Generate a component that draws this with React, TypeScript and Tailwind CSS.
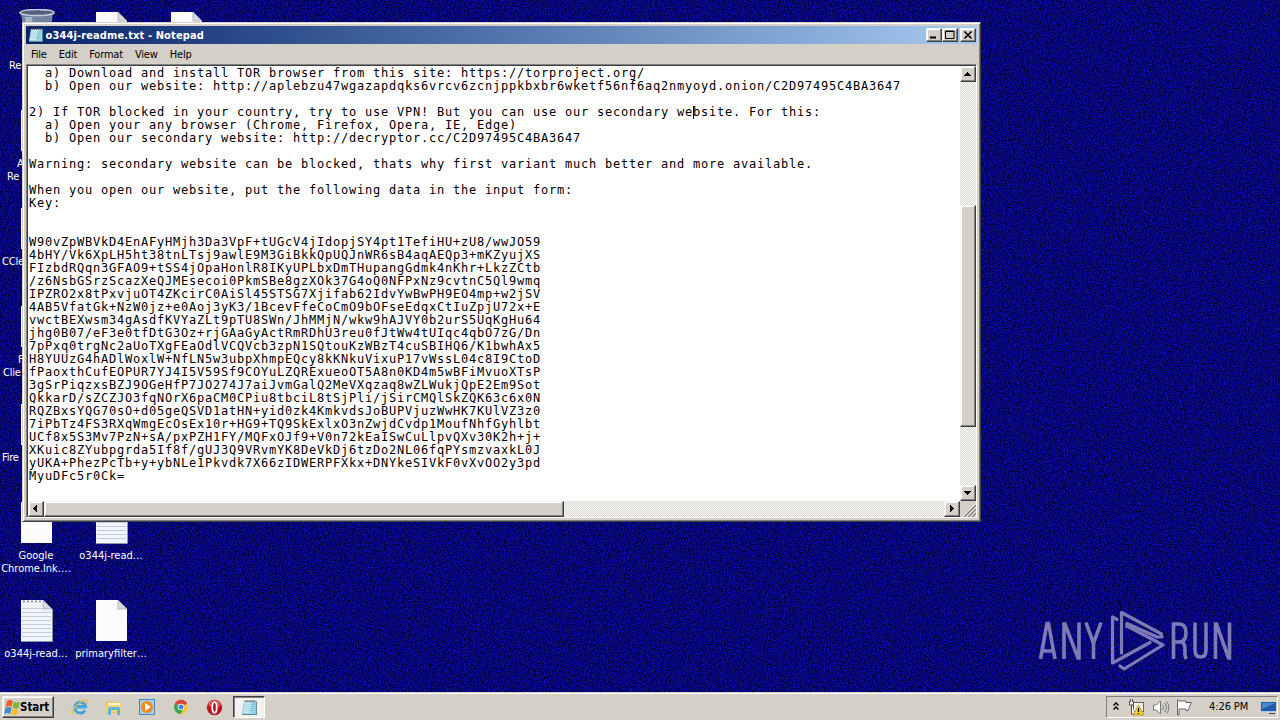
import React from "react";

const RAISED =
  "bg-[#d4d0c8] border border-t-[#f4f2ee] border-l-[#f4f2ee] border-r-[#404040] border-b-[#404040] shadow-[inset_-1px_-1px_0_#808080,inset_1px_1px_0_#ffffff]";
const TRACK =
  "bg-[#eae8e4] bg-[repeating-conic-gradient(#d9d6d0_0_25%,#fbfaf9_0_50%)] bg-[length:2px_2px]";
const UI = "font-['DejaVu_Sans_Condensed','DejaVu_Sans',sans-serif] [font-stretch:condensed]";

const LINES: string[] = [
  "  a) Download and install TOR browser from this site: https://torproject.org/",
  "  b) Open our website: http://aplebzu47wgazapdqks6vrcv6zcnjppkbxbr6wketf56nf6aq2nmyoyd.onion/C2D97495C4BA3647",
  "",
  "2) If TOR blocked in your country, try to use VPN! But you can use our secondary website. For this:",
  "  a) Open your any browser (Chrome, Firefox, Opera, IE, Edge)",
  "  b) Open our secondary website: http://decryptor.cc/C2D97495C4BA3647",
  "",
  "Warning: secondary website can be blocked, thats why first variant much better and more available.",
  "",
  "When you open our website, put the following data in the input form:",
  "Key:",
  "",
  "",
  "W90vZpWBVkD4EnAFyHMjh3Da3VpF+tUGcV4jIdopjSY4pt1TefiHU+zU8/wwJO59",
  "4bHY/Vk6XpLH5ht38tnLTsj9awlE9M3GiBkkQpUQJnWR6sB4aqAEQp3+mKZyujXS",
  "FIzbdRQqn3GFAO9+tSS4jOpaHonlR8IKyUPLbxDmTHupangGdmk4nKhr+LkzZCtb",
  "/z6NsbGSrzScazXeQJMEsecoi0PkmSBe8gzXOk37G4oQ0NFPxNz9cvtnC5Ql9wmq",
  "IPZRO2x8tPxvjuOT4ZKcirC0AiSl45STSG7Xjifab62IdvYwBwPH9EO4mp+w2jSV",
  "4AB5VfatGk+NzW0jz+e0Aoj3yK3/1BcevFfeCoCmO9bOFseEdqxCtIuZpjU72x+E",
  "vwctBEXwsm34gAsdfKVYaZLt9pTU8SWn/JhMMjN/wkw9hAJVY0b2urS5UqKgHu64",
  "jhg0B07/eF3e0tfDtG3Oz+rjGAaGyActRmRDhU3reu0fJtWw4tUIqc4qbO7zG/Dn",
  "7pPxq0trgNc2aUoTXgFEaOdlVCQVcb3zpN1SQtouKzWBzT4cuSBIHQ6/K1bwhAx5",
  "H8YUUzG4hADlWoxlW+NfLN5w3ubpXhmpEQcy8kKNkuVixuP17vWssL04c8I9CtoD",
  "fPaoxthCufEOPUR7YJ4I5V59Sf9COYuLZQRExueoOT5A8n0KD4m5wBFiMvuoXTsP",
  "3gSrPiqzxsBZJ9OGeHfP7JO274J7aiJvmGalQ2MeVXqzaq8wZLWukjQpE2Em9Sot",
  "QkkarD/sZCZJO3fqNOrX6paCM0CPiu8tbciL8tSjPli/jSirCMQlSkZQK63c6x0N",
  "RQZBxsYQG70sO+d05geQSVD1atHN+yid0zk4KmkvdsJoBUPVjuzWwHK7KUlVZ3z0",
  "7iPbTz4FS3RXqWmgEcOsEx10r+HG9+TQ9SkExlxO3nZwjdCvdp1MoufNhfGyhlbt",
  "UCf8x5S3Mv7PzN+sA/pxPZH1FY/MQFxOJf9+V0n72kEaISwCuLlpvQXv30K2h+j+",
  "XKuic8ZYubpgrda5If8f/gUJ3Q9VRvmYK8DeVkDj6tzDo2NL06fqPYsmzvaxkL0J",
  "yUKA+PhezPcTb+y+ybNLe1Pkvdk7X66zIDWERPFXkx+DNYkeSIVkF0vXvOO2y3pd",
  "MyuDFc5r0Ck=",
];

function Wallpaper() {
  return (
    <svg className="absolute inset-0" width="1280" height="720">
      <filter id="grain" x="0" y="0" width="100%" height="100%" colorInterpolationFilters="sRGB">
        <feTurbulence type="fractalNoise" baseFrequency="0.7" numOctaves="2" seed="4" />
        <feColorMatrix values="0.15 0 0 0 -0.05  0.15 0 0 0 -0.05  1.2 0 0 0 -0.14  0 0 0 0 1" />
      </filter>
      <rect width="1280" height="720" fill="#00007c" />
      <rect width="1280" height="720" filter="url(#grain)" />
    </svg>
  );
}

function PageIcon({ lined }: { lined?: boolean }) {
  return (
    <svg width="34" height="44" viewBox="0 0 34 44">
      <path d="M1 1h22l9 9v32H1z" fill={lined ? "#f1f5fa" : "#fbfbfb"} />
      {lined && (
        <>
          <path d="M2 9.5h21M2 13.5h29M2 17.5h29M2 21.5h29M2 25.5h29M2 29.5h29M2 33.5h29M2 37.5h29" stroke="#bccbdf" />
          <path d="M1 42.5h31.5V10" stroke="#8794a8" fill="none" />
          <path d="M3 2.5h20" stroke="#8c98a8" strokeWidth="2" strokeDasharray="2 2" />
        </>
      )}
      <path d="M23 1v9h9z" fill="#d5d8df" stroke="#a0a4ae" strokeWidth=".7" />
    </svg>
  );
}

function RecycleBin() {
  return (
    <svg width="36" height="44" viewBox="0 0 36 44">
      <path d="M2 4l5 38h22l5-38z" fill="#73839f" />
      <path d="M6 8l3 30h7L13 8z" fill="#a8b6ca" />
      <ellipse cx="18" cy="3.5" rx="17" ry="3" fill="#536283" stroke="#c3cedc" strokeWidth="1.5" />
    </svg>
  );
}

function Notepad({ size }: { size: number }) {
  return (
    <svg width={size} height={size} viewBox="0 0 16 16">
      <path d="M3 2h12v13H1z" fill="#5d8794" />
      <path d="M3 2h11v12H1z" fill="#9bd5e4" />
      <path d="M4 3h6L8 13H2z" fill="#d0f0f5" />
      <path d="M4 5h9M4 7h9M3 9h9M3 11h9" stroke="#70b5ca" strokeWidth=".5" />
      <path d="M4.5 1v2M6.5 1v2M8.500 1v2M10.500 1v2M12.500 1v2" stroke="#445" strokeWidth=".8" />
    </svg>
  );
}

type Icon = { x: number; y: number; label: string[]; kind: "page" | "lined" | "bin" };

const ICONS: Icon[] = [
  { x: 37, y: 9, label: [], kind: "bin" },
  { x: 112, y: 11, label: [], kind: "page" },
  { x: 187, y: 11, label: [], kind: "page" },
  { x: 37, y: 109, label: [], kind: "page" },
  { x: 37, y: 207, label: [], kind: "page" },
  { x: 37, y: 305, label: [], kind: "page" },
  { x: 37, y: 403, label: [], kind: "page" },
  { x: 37, y: 501, label: ["Google", "Chrome.lnk.…"], kind: "page" },
  { x: 112, y: 501, label: ["o344j-read…"], kind: "lined" },
  { x: 37, y: 599, label: ["o344j-read…"], kind: "lined" },
  { x: 112, y: 599, label: ["primaryfilter…"], kind: "page" },
];

const EDGE_LABELS: { y: number; indent: number; text: string }[] = [
  { y: 59, indent: 9, text: "Re" },
  { y: 157, indent: 17, text: "A" },
  { y: 170, indent: 7, text: "Re" },
  { y: 255, indent: 2, text: "CCle" },
  { y: 353, indent: 18, text: "F" },
  { y: 366, indent: 3, text: "Clie" },
  { y: 451, indent: 2, text: "Fire" },
];

function DesktopIcon({ x, y, label, kind }: Icon) {
  return (
    <div className="absolute flex w-[76px] flex-col items-center" style={{ left: x - 38, top: y }}>
      {kind === "bin" ? <RecycleBin /> : <PageIcon lined={kind === "lined"} />}
      <div className={`mt-[4px] pr-[2px] text-center text-[11px] leading-[13px] tracking-[0px] whitespace-nowrap text-white ${UI}`}>
        {label.map((t) => (
          <div key={t}>{t}</div>
        ))}
      </div>
    </div>
  );
}

function ScrollButton({ d }: { d: string }) {
  return (
    <div className={`flex h-4 w-4 shrink-0 items-center justify-center ${RAISED}`}>
      <svg width="8" height="8" viewBox="0 0 8 8" shapeRendering="crispEdges">
        <path d={d} fill="#000" />
      </svg>
    </div>
  );
}

function TitleButton({ children }: { children: React.ReactNode }) {
  return (
    <div className={`flex h-[14px] w-4 items-center justify-center ${RAISED}`}>
      <svg width="10" height="10" viewBox="0 0 10 10" fill="none" stroke="#000">
        {children}
      </svg>
    </div>
  );
}

function NotepadWindow() {
  return (
    <div className="absolute top-[22px] left-[22px] flex h-[500px] w-[959px] flex-col border border-t-[#d4d0c8] border-l-[#d4d0c8] border-r-[#404040] border-b-[#404040] bg-[#d4d0c8] p-[3px] shadow-[inset_1px_1px_0_#fff,inset_-1px_-1px_0_#808080]">
      <div className="flex h-[18px] shrink-0 items-center bg-linear-to-r from-[#0a246a] to-[#a6caf0] pr-px pl-[2px]">
        <Notepad size={16} />
        <span className={`ml-[1.5px] flex-1 pt-px text-[11px] leading-[17px] font-bold tracking-[0.12px] whitespace-nowrap text-white ${UI}`}>
          o344j-readme.txt - Notepad
        </span>
        <TitleButton><path d="M1 7.500h6" strokeWidth="2" /></TitleButton>
        <TitleButton><path d="M.5 1h8.500v7.500h-8.500zM0 1.500h9" /></TitleButton>
        <div className="w-[2px]" />
        <TitleButton><path d="M1.500 1.500l7 7M8.500 1.500l-7 7" strokeWidth="1.600" /></TitleButton>
      </div>
      <div className={`flex h-[20px] shrink-0 items-center gap-[12px] pt-px pl-[5px] text-[11px] leading-[18px] tracking-[-0.18px] text-black ${UI}`}>
        {["File", "Edit", "Format", "View", "Help"].map((m) => (
          <span key={m}>{m}</span>
        ))}
      </div>
      <div className="flex min-h-0 flex-1 flex-col border border-t-[#808080] border-l-[#808080] border-r-white border-b-white">
        <div className="flex min-h-0 flex-1 flex-col border-t border-l border-[#404040]">
          <div className="flex min-h-0 flex-1">
            <div className="relative flex-1 overflow-hidden bg-white pt-px pl-[1px] font-['DejaVu_Sans_Mono',monospace] text-[12px] leading-[13px] tracking-[0.776px] text-black">
              {LINES.map((l, i) => (
                <div key={i} className="h-[13px] whitespace-pre">{l}</div>
              ))}
              <div className="absolute top-[40px] left-[665px] h-[13px] w-px bg-black" />
            </div>
            <div className={`flex w-4 shrink-0 flex-col ${TRACK}`}>
              <ScrollButton d="M0 6h7v-1h-1v-1h-1v-1h-1v-1h-1v1h-1v1h-1v1h-1z" />
              <div className="h-[123px]" />
              <div className={`h-[222px] ${RAISED}`} />
              <div className="flex-1" />
              <ScrollButton d="M0 2h7v1h-1v1h-1v1h-1v1h-1v-1h-1v-1h-1v-1h-1z" />
            </div>
          </div>
          <div className="flex h-4 shrink-0">
            <div className={`flex flex-1 ${TRACK}`}>
              <ScrollButton d="M5 0v7h-1v-1h-1v-1h-1v-1h-1v-1h1v-1h1v-1h1v-1z" />
              <div className={`h-4 w-[520px] ${RAISED}`} />
              <div className="flex-1" />
              <ScrollButton d="M2 0v7h1v-1h1v-1h1v-1h1v-1h-1v-1h-1v-1h-1v-1z" />
            </div>
            <svg className="bg-[#d4d0c8]" width="16" height="16">
              <path d="M4 16L16 4M8 16l8-8M12 16l4-4" stroke="#808080" strokeWidth="1.500" />
              <path d="M2.500 16L16 2.500M6.500 16L16 6.500M10.500 16l5.500-5.500" stroke="#fff" strokeWidth=".8" />
            </svg>
          </div>
        </div>
      </div>
    </div>
  );
}

function Watermark() {
  return (
    <div className="absolute top-[608px] left-[1036px] opacity-65">
      <svg width="200" height="66" viewBox="0 0 200 66" fill="none" stroke="#bdb9d8" strokeWidth="3.600">
        <path d="M4.500 51L11 15.500h1.500L19 51M7 43h9.500" />
        <path d="M28 51V16h1l13 34h1V14.500" />
        <path d="M50 14.500l7.500 21 7.500-21M57.500 34v17" />
        <path d="M137.500 51V16h5.500q7 0 7 9t-7 9h-5M144 34q5 0 5 7v6l1 4" />
        <path d="M159 14.500V42q0 7 5.500 7t5.500-7V14.500" />
        <path d="M179.500 51V16h1l12 34h1V14.500" />
        <g strokeWidth="3.200" strokeLinejoin="round" strokeLinecap="round">
          <path d="M81 11.500l-4.500-2.500V55L114 34.500" />
          <path d="M85.500 45V4.500L125.500 26l.5 3h-5L91 15.500v3" />
          <path d="M91 18L127 37 88 61l-4-3" />
          <path d="M86 46L114 30" strokeWidth="0" />
        </g>
      </svg>
    </div>
  );
}

function Taskbar() {
  return (
    <div className="absolute bottom-0 left-0 flex h-[28px] w-full items-center border-t border-[#d4d0c8] bg-[#d4d0c8] pt-px pr-[2px] pl-[2px] shadow-[inset_0_1px_0_#fff]">
      <div className={`flex h-[22px] w-[52px] items-center pl-px ${RAISED}`}>
        <svg width="17" height="17" viewBox="0 0 17 17" className="shrink-0">
          <path d="M3 2q3-2 6 0L7.500 8q-3-2-6 0z" fill="#e8622c" />
          <path d="M10 2.500q3 2 6 0L14.500 9q-3 1.500-6-.5z" fill="#7db83a" />
          <path d="M1.500 9q3-2 6 0L6 15q-3-2-6 0z" fill="#3f8ad8" />
          <path d="M8.500 9.500q3 2 6 0L13 15.500q-3 1.500-6-.5z" fill="#f6bd2c" />
        </svg>
        <span className={`-ml-px pt-px text-[11.5px] leading-[17px] font-bold tracking-[-0.05px] text-black ${UI}`}>Start</span>
      </div>
      <div className="ml-[17px] flex flex-1 items-center">
        <svg width="18" height="18" viewBox="0 0 18 18" fill="none">
          <path d="M14 12.500a5.500 5.500 0 1 1 .7-4H4.500" stroke="#3da3de" strokeWidth="2.800" />
          <path d="M4 10.200h11" stroke="#65bdeb" strokeWidth="1.500" />
          <path d="M2 16q-3-2 3-8 7-7 11-6 2 1-.5 4.500" stroke="#e8b934" strokeWidth="1.300" />
        </svg>
        <svg className="ml-[16px]" width="18" height="18" viewBox="0 0 18 18">
          <path d="M1 3h6l1 1h8v11H1z" fill="#e9c75f" />
          <path d="M3 5h12v3H3z" fill="#fff5c9" />
          <path d="M2 7h14v7H2z" fill="#efd57c" />
          <path d="M3 17V11q0-2 2-2h8q2 0 2 2v6h-3v-5H6v5z" fill="#5bb5dc" />
        </svg>
        <svg className="ml-[16px]" width="17" height="17" viewBox="0 0 17 17">
          <rect x=".5" y=".5" width="15" height="15" fill="#a6cdec" stroke="#4c86b8" />
          <circle cx="8" cy="8" r="6" fill="#f28b1d" />
          <path d="M6 4l6 4-6 4z" fill="#fff" />
        </svg>
        <svg className="ml-[17px]" width="16" height="16" viewBox="0 0 16 16">
          <circle cx="8" cy="8" r="7" fill="#f5cb2d" />
          <path d="M8 8L1.900 4.500a7 7 0 0 1 12.300 0z" fill="#dc4437" />
          <path d="M8 8L1.900 4.500A7 7 0 0 0 7.500 15l3-5z" fill="#33a457" />
          <circle cx="8" cy="8" r="3.300" fill="#fff" />
          <circle cx="8" cy="8" r="2.500" fill="#4286e8" />
        </svg>
        <svg className="ml-[17px]" width="17" height="17" viewBox="0 0 17 17">
          <circle cx="8.500" cy="8.500" r="7.700" fill="#bd1720" />
          <ellipse cx="8.500" cy="5" rx="6" ry="4" fill="#df5a58" />
          <ellipse cx="8.500" cy="8.500" rx="2.200" ry="5.300" fill="#a40f18" stroke="#fff" strokeWidth="1.800" />
        </svg>
        <div className="ml-[10px] flex h-[22px] w-[32px] items-center justify-center border border-t-[#404040] border-l-[#404040] border-r-white border-b-white bg-[#f3f1ee] shadow-[inset_1px_1px_0_#808080]">
          <Notepad size={17} />
        </div>
      </div>
      <div className="flex h-[22px] w-[172px] items-center border border-t-[#808080] border-l-[#808080] border-r-white border-b-white pl-[5px]">
        <svg width="8" height="12" viewBox="0 0 8 12" fill="none" stroke="#000" strokeWidth="1.400">
          <path d="M1.500 4.500l2.500-2.500 2.500 2.500M1.500 8.500l2.500-2.500 2.500 2.500" />
        </svg>
        <svg className="ml-[8px]" width="17" height="17" viewBox="0 0 17 17">
          <rect x="5.500" y="3.500" width="10" height="9" fill="#eee" stroke="#666" />
          <path d="M1.500 2v4h4V2M3.500 6v9H7M2.500 0v3M4.500 0v3" fill="#fff" stroke="#555" />
          <path d="M10.500 6l5.500 10H5z" fill="#f6d22b" stroke="#a08010" strokeWidth=".6" />
          <path d="M10.500 9v4M10.500 14v1" stroke="#000" strokeWidth="1.200" />
        </svg>
        <svg className="ml-[7px]" width="18" height="17" viewBox="0 0 18 17" fill="none" stroke="#777">
          <path d="M1.500 6h3l4-4v13l-4-4h-3z" fill="#fff" />
          <path d="M10.500 6q2 2.500 0 5M12.500 4q4 4.500 0 9M14.500 2.500q5 6 0 12" />
        </svg>
        <svg className="ml-[6px]" width="18" height="17" viewBox="0 0 18 17" fill="#fff" stroke="#666">
          <path d="M1.500 1v15h1.500v-6h7v1.500h2l3.500-8H10V2H3V1z" />
        </svg>
        <span className={`ml-[15px] flex-1 text-[11px] leading-[18px] tracking-[-0.1px] whitespace-nowrap text-black ${UI}`}>4:26 PM</span>
        <svg width="16" height="15" viewBox="0 0 16 15">
          <path d="M0 2h15v10H0z" fill="#1f5cae" />
          <path d="M1 3h13L1 9z" fill="#478bd4" />
          <path d="M0 11.500h15" stroke="#abc8e6" />
          <path d="M8 13.500h6" stroke="#345" />
        </svg>
      </div>
    </div>
  );
}

export default function App() {
  return (
    <div className="relative h-[720px] w-[1280px] overflow-hidden bg-[#00007c]">
      <Wallpaper />
      {ICONS.map((icon) => (
        <DesktopIcon key={`${icon.x}-${icon.y}`} {...icon} />
      ))}
      {EDGE_LABELS.map((l) => (
        <div
          key={l.y}
          className={`absolute left-0 text-[11px] leading-[13px] tracking-[-0.2px] whitespace-nowrap text-white ${UI}`}
          style={{ top: l.y, paddingLeft: l.indent }}
        >
          {l.text}
        </div>
      ))}
      <Watermark />
      <NotepadWindow />
      <Taskbar />
    </div>
  );
}
